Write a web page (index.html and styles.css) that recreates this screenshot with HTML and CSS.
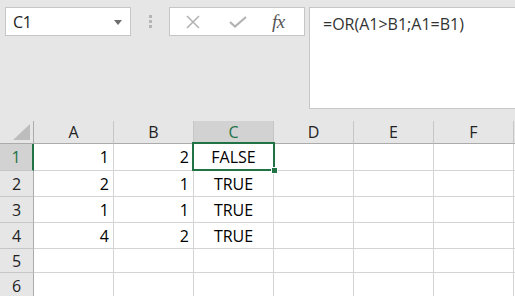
FILE: index.html
```html
<!DOCTYPE html>
<html>
<head>
<meta charset="utf-8">
<link rel="stylesheet" href="styles.css">
</head>
<body>
<div class="toolbar">
  <div class="namebox">
    <span class="ref">C1</span>
    <svg class="arrow" width="8" height="5" viewBox="0 0 8 5"><path d="M0 0H8L4 5Z" fill="#6d6d6d"/></svg>
  </div>
  <div class="grip"><i></i><i></i><i></i></div>
  <div class="fbtns">
    <svg class="ico" width="16" height="14" viewBox="0 0 16 14"><path d="M2 1L14 13M14 1L2 13" stroke="#b3b3b3" stroke-width="1.6" fill="none"/></svg>
    <svg class="ico" width="18" height="12" viewBox="0 0 18 12"><path d="M1 6L6 10.5L17 1" stroke="#b3b3b3" stroke-width="2.2" fill="none"/></svg>
    <span class="fx">fx</span>
  </div>
  <div class="formula">=OR(A1&gt;B1;A1=B1)</div>
</div>
<div class="sheet">
  <div class="grid">
    <div class="corner"><svg width="17" height="16" viewBox="0 0 17 16"><path d="M17 0V16H0Z" fill="#bdbdbd"/></svg></div>
    <div class="ch">A</div><div class="ch">B</div><div class="ch sel">C</div><div class="ch">D</div><div class="ch">E</div><div class="ch">F</div><div class="ch last"></div>

    <div class="rh sel">1</div><div class="c n">1</div><div class="c n">2</div><div class="c t">FALSE</div><div class="c"></div><div class="c"></div><div class="c"></div><div class="c last"></div>
    <div class="rh">2</div><div class="c n">2</div><div class="c n">1</div><div class="c t">TRUE</div><div class="c"></div><div class="c"></div><div class="c"></div><div class="c last"></div>
    <div class="rh">3</div><div class="c n">1</div><div class="c n">1</div><div class="c t">TRUE</div><div class="c"></div><div class="c"></div><div class="c"></div><div class="c last"></div>
    <div class="rh">4</div><div class="c n">4</div><div class="c n">2</div><div class="c t">TRUE</div><div class="c"></div><div class="c"></div><div class="c"></div><div class="c last"></div>
    <div class="rh">5</div><div class="c"></div><div class="c"></div><div class="c"></div><div class="c"></div><div class="c"></div><div class="c"></div><div class="c last"></div>
    <div class="rh">6</div><div class="c"></div><div class="c"></div><div class="c"></div><div class="c"></div><div class="c"></div><div class="c"></div><div class="c last"></div>
  </div>
  <div class="selection"><span class="handle"></span></div>
</div>
</body>
</html>
```
FILE: styles.css
```css
html, body {
  margin: 0;
  padding: 0;
  background: #e6e6e6;
  overflow: hidden;
}
body {
  width: 515px;
  height: 296px;
  font-family: "Open Sans", "Noto Sans", sans-serif;
  font-size: 16px;
}
.toolbar {
  display: flex;
  align-items: flex-start;
  height: 121px;
  box-sizing: border-box;
  padding: 7px 0 0 5px;
}
.namebox {
  width: 126px;
  height: 29px;
  box-sizing: border-box;
  border: 1px solid #c6c6c6;
  background: #fff;
  display: flex;
  align-items: center;
  justify-content: space-between;
  padding: 0 8px 0 7px;
  color: #222;
}
.ref {
  font-size: 16px;
  line-height: 1;
  letter-spacing: -0.3px;
}
.arrow {
  margin-top: 1px;
}
.grip {
  display: flex;
  flex-direction: column;
  gap: 2px;
  margin: 8px 0 0 18px;
}
.grip i {
  display: block;
  width: 3px;
  height: 3px;
  background: #b5b5b5;
}
.fbtns {
  margin-left: 17px;
  width: 136px;
  height: 29px;
  box-sizing: border-box;
  border: 1px solid #c6c6c6;
  background: #fff;
  display: flex;
  align-items: center;
  padding-left: 15px;
}
.fbtns .ico:nth-child(1) { margin-right: 28px; }
.fbtns .ico:nth-child(2) { margin-right: 25px; }
.fx {
  font-family: "Liberation Serif", serif;
  font-style: italic;
  font-size: 19px;
  color: #555;
  line-height: 1;
  letter-spacing: -0.5px;
}
.formula {
  margin-left: 4px;
  flex: 1;
  height: 102px;
  box-sizing: border-box;
  border: 1px solid #c6c6c6;
  border-right: none;
  background: #fff;
  padding: 4px 0 0 13px;
  color: #333;
  font-size: 16px;
  line-height: 24px;
}
.sheet {
  position: relative;
}
.grid {
  display: grid;
  grid-template-columns: 34px repeat(6, 80px) 1fr;
  grid-template-rows: 23px 27px 26px 26px 26px 24px 26px;
}
.grid > div {
  box-sizing: border-box;
  display: flex;
  align-items: center;
  line-height: 1;
}
.corner {
  border-right: 1px solid #ababab;
  border-bottom: 1px solid #ababab;
  justify-content: flex-end;
  align-items: flex-end !important;
  padding: 0 3px 3px 0;
}
.ch {
  justify-content: center;
  color: #222;
  border-right: 1px solid #c6c6c6;
  border-bottom: 1px solid #ababab;
}
.ch.last { border-right: none; }
.ch.sel {
  background: #d2d2d2;
  color: #217346;
}
.rh {
  justify-content: center;
  color: #222;
  background: #e6e6e6;
  border-right: 1px solid #ababab;
  border-bottom: 1px solid #c6c6c6;
}
.rh.sel {
  background: #d2d2d2;
  color: #217346;
  border-right: 2px solid #217346;
}
.c {
  background: #fff;
  border-right: 1px solid #d4d4d4;
  border-bottom: 1px solid #d4d4d4;
  color: #000;
}
.c.last { border-right: none; }
.c.n {
  justify-content: flex-end;
  padding-right: 4px;
}
.c.t {
  justify-content: center;
}
.selection {
  position: absolute;
  left: 192px;
  top: 21px;
  width: 83px;
  height: 29px;
  box-sizing: border-box;
  border: 2px solid #217346;
}
.handle {
  position: absolute;
  right: -5px;
  bottom: -5px;
  width: 7px;
  height: 7px;
  box-sizing: border-box;
  background: #217346;
  border: 1px solid #fff;
}
```
